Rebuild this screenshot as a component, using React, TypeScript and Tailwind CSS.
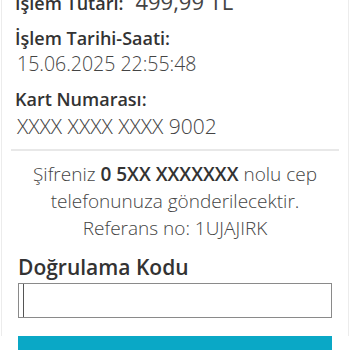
export default function App() {
  return (
    <div className="w-[350px] h-[350px] overflow-hidden bg-white font-['Open_Sans',sans-serif]">
      <div className="h-full ml-[1px] mr-[1px] border-x border-[#ececec]">
        {/* Transaction details */}
        <div className="pl-[13px] pr-3">
          <div className="flex items-baseline gap-[12px] -mt-[14px] h-[28px] leading-[30px]">
            <span className="text-[18px] font-semibold text-[#333]">İşlem Tutarı:</span>
            <span className="text-[22px] text-[#444]">499,99 TL</span>
          </div>
          <div className="mt-[12px] text-[18px] font-semibold text-[#333] leading-[24px]">İşlem Tarihi-Saati:</div>
          <div className="pl-[2px] text-[19.5px] font-light text-[#444] leading-[28px]">15.06.2025 22:55:48</div>
          <div className="mt-[9px] text-[18px] font-semibold text-[#333] leading-[24px]">Kart Numarası:</div>
          <div className="mt-[1px] pl-[2px] text-[21px] font-light text-[#444] leading-[28px]">XXXX XXXX XXXX 9002</div>
        </div>

        <div className="mx-[9px] mt-[9px] h-[2px] bg-[#e8e8e8]" />

        {/* SMS notice */}
        <div className="mt-[10px] text-center text-[19px] font-light text-[#444] leading-[27px]">
          <div>
            Şifreniz <span className="font-semibold text-[#333]">0 5XX XXXXXXX</span> nolu cep
          </div>
          <div>telefonunuza gönderilecektir.</div>
          <div>Referans no: 1UJAJIRK</div>
        </div>

        {/* Verification code */}
        <div className="px-[16px]">
          <div className="mt-[11px] text-[21px] font-semibold text-[#333] leading-[28px]">Doğrulama Kodu</div>
          <div className="mt-[2px] h-[35px] border border-[#8a8a8a] flex">
            <div className="ml-[4px] w-[1px] h-full bg-[#555]" />
          </div>
          <div className="mt-[18px] h-[30px] bg-[#0aa8c6]" />
        </div>
      </div>
    </div>
  );
}
